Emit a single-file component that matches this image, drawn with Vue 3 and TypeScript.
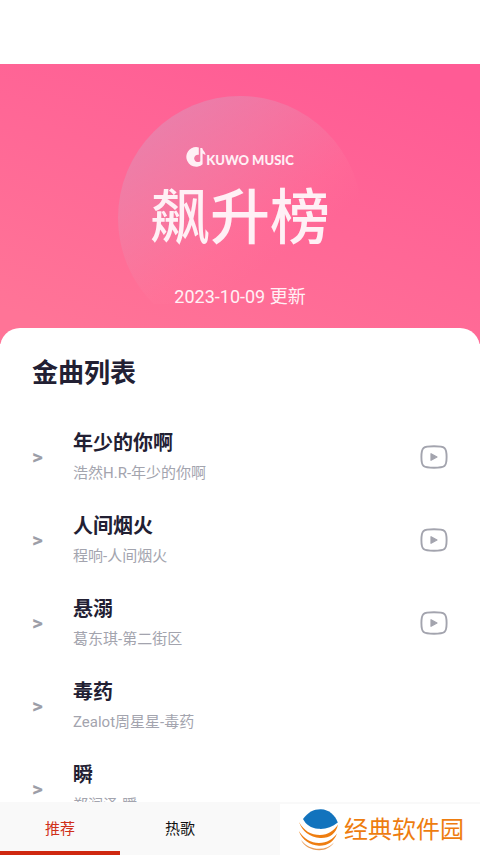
<script setup lang="ts">
import { ref } from 'vue'

interface Song {
  title: string
  detail: string
  hasVideo: boolean
}

const songs: Song[] = [
  { title: '年少的你啊', detail: '浩然H.R-年少的你啊', hasVideo: true },
  { title: '人间烟火', detail: '程响-人间烟火', hasVideo: true },
  { title: '悬溺', detail: '葛东琪-第二街区', hasVideo: true },
  { title: '毒药', detail: 'Zealot周星星-毒药', hasVideo: false },
  { title: '瞬', detail: '郑润泽-瞬', hasVideo: false },
]

const tabs = ['推荐', '热歌']
const activeTab = ref('推荐')
</script>

<template>
  <div class="screen">
    <main class="content">
      <header class="hero">
        <div class="disc">
          <div class="brand">
            <svg class="brand-mark" viewBox="0 0 20 20" aria-hidden="true">
              <path
                d="M12.800.4A9.800 9.800 0 1 0 16.600 17.200V6.600l2.900 1.300C19.400 4.600 17 4.200 16.200 1H14.300V14.200A3.700 3.700 0 1 1 12.800 7.800Z"
                fill="currentColor"
              />
            </svg>
            <span>KUWO MUSIC</span>
          </div>
          <h1 class="chart-name">飙升榜</h1>
          <p class="updated">2023-10-09 更新</p>
        </div>
      </header>

      <section class="sheet">
        <h2 class="sheet-title">金曲列表</h2>
        <ul class="songs">
          <li v-for="song in songs" :key="song.title" class="song">
            <span class="marker">&gt;</span>
            <div class="info">
              <h3 class="song-title">{{ song.title }}</h3>
              <p class="song-detail">{{ song.detail }}</p>
            </div>
            <button v-if="song.hasVideo" class="play" type="button" :aria-label="song.title">
              <svg viewBox="0 0 28 24" aria-hidden="true">
                <path
                  d="M14 1.2c5.500 0 8.600.2 10.400 1.700C26.200 4.400 26.600 7.200 26.600 12s-.4 7.600-2.200 9.100c-1.800 1.500-4.900 1.700-10.400 1.700s-8.600-.2-10.400-1.700C1.800 19.600 1.400 16.800 1.400 12s.4-7.600 2.200-9.100C5.400 1.400 8.500 1.200 14 1.200Z"
                  fill="none"
                  stroke="currentColor"
                  stroke-width="1.9"
                />
                <path
                  d="M11 8.700v6.600l6-3.300Z"
                  fill="currentColor"
                  stroke="currentColor"
                  stroke-width="1.200"
                  stroke-linejoin="round"
                />
              </svg>
            </button>
          </li>
        </ul>
      </section>
    </main>

    <nav class="tabs">
      <button
        v-for="tab in tabs"
        :key="tab"
        type="button"
        class="tab"
        :class="{ active: tab === activeTab }"
        @click="activeTab = tab"
      >
        {{ tab }}
      </button>
    </nav>

    <a class="site" href="#">
      <svg class="site-mark" viewBox="0 0 42 44" aria-hidden="true">
        <path d="M5 11C10 4 16 1 23 1.200 31 1.500 37 7 39.800 14.500 34 19.500 27 21.500 20 20.800 13 20 8 17 5 11Z" fill="#1273bd" />
        <path d="M1 14C6 23 13 27 22 27 30 27 36 22.500 40 16.500 38 26 31 30.500 22 30 12 29.500 4 23 1 14Z" fill="#ee7d10" />
        <path d="M.8 23C6 31 13 35 21 35 29 35 35 31 39 25.500 36 34 29 38 21 37.700 12 37.300 4 32 .8 23Z" fill="#ee7d10" />
        <path d="M3 32C8 38 14 40.800 21 40.800 27 40.800 32 38.500 36 34.500 32 40 27 42.300 21 42.200 13 42 6 38.500 3 32Z" fill="#e99a55" />
      </svg>
      <span>经典软件园</span>
    </a>
  </div>
</template>

<style>
body {
  margin: 0;
}
</style>

<style scoped>
.screen {
  position: relative;
  display: flex;
  flex-direction: column;
  height: 100vh;
  box-sizing: border-box;
  padding-top: 64px;
  overflow: hidden;
  background: #fff;
  font-family: Roboto, 'Noto Sans CJK SC', sans-serif;
}

h1,
h2,
h3,
p,
ul {
  margin: 0;
  padding: 0;
}

button {
  border: 0;
  padding: 0;
  background: none;
  font: inherit;
  cursor: pointer;
}

.content {
  flex: 1;
  min-height: 0;
  overflow: hidden;
}

.hero {
  display: flex;
  justify-content: center;
  padding: 32px 0 40px;
  background: linear-gradient(200deg, #ff5b95 8%, #ff7497 92%);
}

.disc {
  display: flex;
  flex-direction: column;
  align-items: center;
  width: 244px;
  height: 208px;
  padding-top: 51px;
  box-sizing: border-box;
  background: linear-gradient(145deg, #d896bc90 10%, #e88caf70 35%, #ff7c9f30 60%, #ff6b9600 72%);
  clip-path: circle(122px at 122px 122px);
  color: #fff0f5;
}

.brand {
  display: flex;
  align-items: flex-end;
  height: 20px;
  font-family: Lato, sans-serif;
  font-size: 13px;
  font-weight: 900;
  line-height: 14px;
}

.brand-mark {
  width: 20px;
  height: 20px;
}

.chart-name {
  margin-top: 12px;
  font-size: 60px;
  font-weight: 500;
  line-height: 80px;
}

.updated {
  margin-top: 25px;
  font-size: 18px;
  line-height: 26px;
}

.sheet {
  position: relative;
  margin-top: -16px;
  padding: 24px 32px 0;
  border-radius: 20px 20px 0 0;
  background: #fff;
}

.sheet-title {
  color: #222033;
  font-size: 26px;
  font-weight: 700;
  line-height: 42px;
}

.songs {
  margin-top: 21px;
  list-style: none;
}

.song {
  display: flex;
  align-items: center;
  height: 83px;
}

.marker {
  width: 41px;
  color: #9c9ea8;
  font-size: 21px;
  font-weight: 700;
  line-height: 24px;
}

.info {
  flex: 1;
  padding-top: 2px;
}

.song-title {
  color: #222033;
  font-size: 20px;
  font-weight: 700;
  line-height: 30px;
}

.song-detail {
  color: #a3a4ae;
  font-size: 15px;
  line-height: 30px;
}

.play {
  width: 28px;
  height: 24px;
  color: #a3a4ae;
}

.play svg {
  display: block;
}

.tabs {
  display: grid;
  grid-template-columns: repeat(4, 1fr);
  height: 53px;
  background: #f9f9f9;
}

.tab {
  border-top: 4px solid transparent;
  border-bottom: 4px solid transparent;
  color: #111;
  font-size: 15px;
  line-height: 22px;
}

.tab.active {
  border-bottom-color: #cf2810;
  color: #d03018;
}

.site {
  position: absolute;
  right: 0;
  bottom: 0;
  display: flex;
  align-items: center;
  gap: 4px;
  width: 200px;
  height: 51px;
  padding-left: 18px;
  box-sizing: border-box;
  background: #fff;
  color: #ee7d10;
  font-size: 24px;
  line-height: 36px;
  text-decoration: none;
}

.site-mark {
  width: 42px;
  height: 44px;
}
</style>
